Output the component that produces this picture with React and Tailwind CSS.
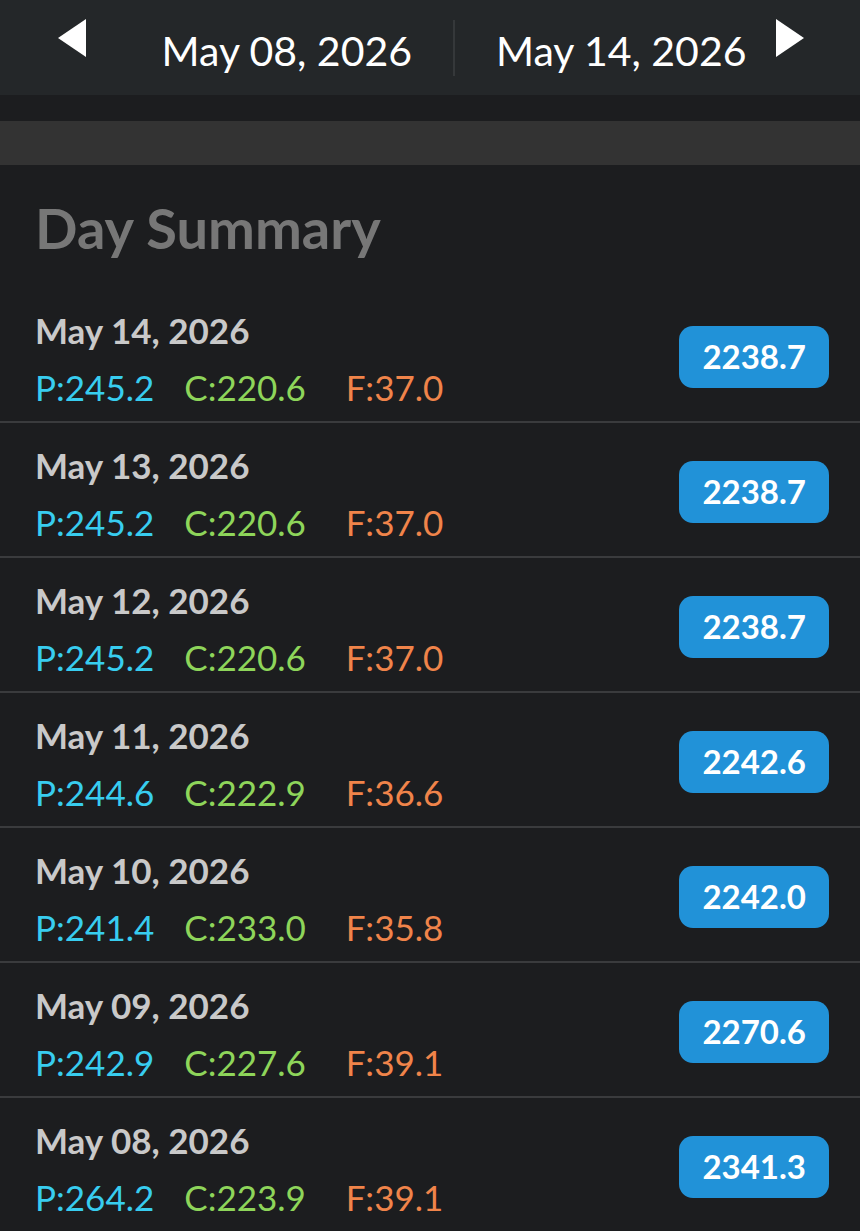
import { useState } from "react"

const days = [
  { date: "May 14, 2026", p: "245.2", c: "220.6", f: "37.0", kcal: "2238.7" },
  { date: "May 13, 2026", p: "245.2", c: "220.6", f: "37.0", kcal: "2238.7" },
  { date: "May 12, 2026", p: "245.2", c: "220.6", f: "37.0", kcal: "2238.7" },
  { date: "May 11, 2026", p: "244.6", c: "222.9", f: "36.6", kcal: "2242.6" },
  { date: "May 10, 2026", p: "241.4", c: "233.0", f: "35.8", kcal: "2242.0" },
  { date: "May 09, 2026", p: "242.9", c: "227.6", f: "39.1", kcal: "2270.6" },
  { date: "May 08, 2026", p: "264.2", c: "223.9", f: "39.1", kcal: "2341.3" },
]

function Arrow({ dir }) {
  return (
    <svg width="30" height="40" viewBox="0 0 30 40" className="fill-white">
      {dir === "left" ? <path d="M29 1 L1 20 L29 39 Z" /> : <path d="M1 1 L29 20 L1 39 Z" />}
    </svg>
  )
}

function DayRow({ day }) {
  return (
    <div className="flex h-[135px] items-center justify-between border-b-2 border-[#3a3b3d] pl-[35px] pr-[31px]">
      <div className="mt-[9px] flex flex-col">
        <span className="text-[35px] font-bold leading-none text-[#c9c9c9]">{day.date}</span>
        <div className="mt-[22px] flex text-[35px] leading-none">
          <span className="text-[#38cdef]">P:{day.p}</span>
          <span className="ml-[30px] text-[#8ed55a]">C:{day.c}</span>
          <span className="ml-[40px] text-[#f0844a]">F:{day.f}</span>
        </div>
      </div>
      <div className="mt-[5px] flex h-[62px] items-center rounded-[14px] bg-[#2192d8] px-[23px] text-[33px] font-bold text-white">
        {day.kcal}
      </div>
    </div>
  )
}

export default function App() {
  const [range] = useState({ start: "May 08, 2026", end: "May 14, 2026" })

  return (
    <div className="min-h-[1231px] bg-[#1c1d1f] font-['Lato',sans-serif]">
      <header className="flex h-[95px] items-center bg-[#242729]">
        <div className="flex w-[150px] pl-[57px] pb-[20px]">
          <Arrow dir="left" />
        </div>
        <span className="w-[262px] pt-[6px] text-right text-[41px] leading-none text-white">{range.start}</span>
        <div className="mx-[41px] h-[56px] w-[2px] bg-[#35383a]" />
        <span className="pt-[6px] text-[41px] leading-none text-white">{range.end}</span>
        <div className="flex flex-1 justify-end pr-[55px] pb-[20px]">
          <Arrow dir="right" />
        </div>
      </header>

      <div className="mt-[26px] h-[44px] bg-[#333333]" />

      <h1 className="px-[35px] pt-[35px] pb-[32px] text-[56px] font-bold leading-[56px] text-[#777777]">
        Day Summary
      </h1>

      <div>
        {days.map((day) => (
          <DayRow key={day.date} day={day} />
        ))}
      </div>
    </div>
  )
}
